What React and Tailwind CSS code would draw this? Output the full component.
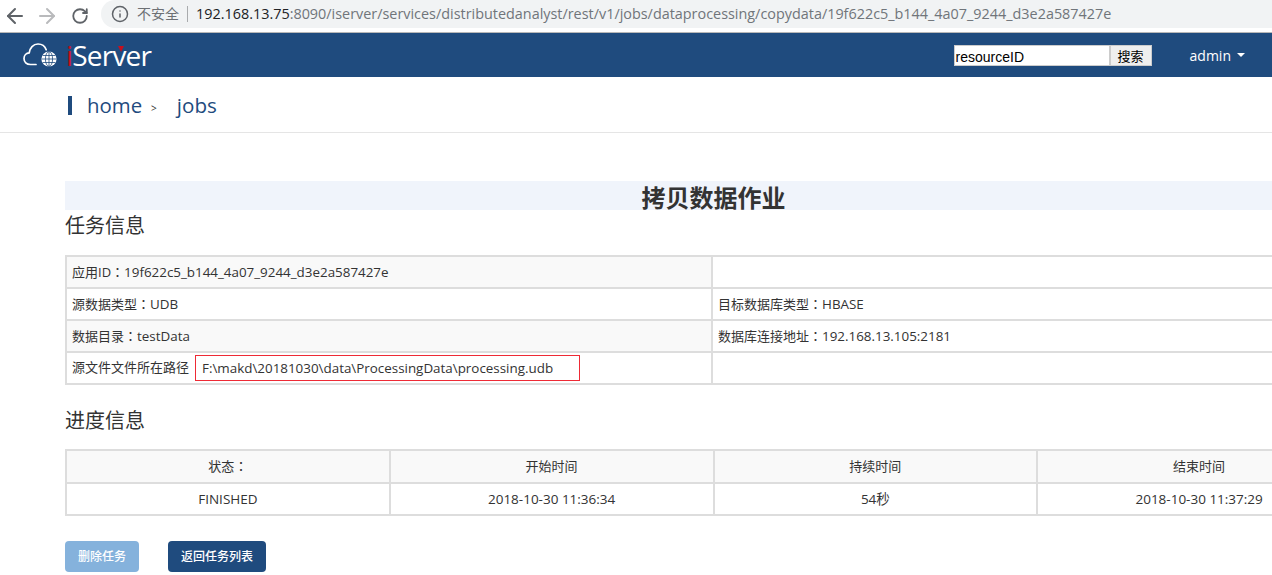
import React from 'react';
import { ArrowLeft, ArrowRight, RotateCw, Info } from 'lucide-react';

const cjk = '"Open Sans", "Noto Sans CJK SC", sans-serif';

function Logo() {
    return (
        <div className="flex items-center ml-[23px]">
            <svg width="38" height="26" viewBox="0 0 38 26" fill="none">
                <path d="M13 22.5H7.5C3.5 22.5 1 20 1 16.5C1 13.2 3.4 11 6.2 10.8C6.8 6 10.2 2 15 2C19 2 22 4.4 23.2 7.8" stroke="white" strokeWidth="1.7" strokeLinecap="round" />
                <circle cx="26" cy="17" r="7.6" fill="white" />
                <g stroke="#1f4b7e" strokeWidth="0.8">
                    <path d="M18.5 17H33.5M19.6 13.5H32.4M19.6 20.5H32.4M26 9.5V24.5" />
                    <ellipse cx="26" cy="17" rx="3.6" ry="7.4" />
                </g>
            </svg>
            <div className="relative ml-[5px] text-[28px] leading-none text-white tracking-[-0.8px] font-['Open_Sans',sans-serif]">
                <span className="text-[#c5101f]">i</span>Server
                <span className="absolute left-[52px] top-[5px] w-0 h-0 border-l-[3px] border-r-[3px] border-t-[6px] border-l-transparent border-r-transparent border-t-[#c5101f]"></span>
            </div>
        </div>
    );
}

function BrowserBar() {
    return (
        <div className="h-[33px] bg-white border-b border-[#b8b8b8] flex items-center">
            <ArrowLeft className="ml-[3px] text-[#5f6368]" size={24} strokeWidth={2} />
            <ArrowRight className="ml-[8px] text-[#b9babc]" size={24} strokeWidth={2} />
            <RotateCw className="ml-[12px] text-[#5f6368]" size={18} strokeWidth={2.4} />
            <div className="ml-[12px] flex-1 h-[28px] mb-[4px] mt-[-1px] bg-[#f1f3f4] rounded-l-[14px] flex items-center text-[14.4px] whitespace-nowrap font-['Open_Sans','Noto_Sans_CJK_SC',sans-serif]">
                <Info className="ml-[10px] text-[#5f6368]" size={18} strokeWidth={2} />
                <span className="ml-[8px] text-[14px] text-[#6d7074]">不安全</span>
                <span className="ml-[8px] w-px h-[16px] bg-[#a9abad]"></span>
                <span className="ml-[8px] text-[#202124]">192.168.13.75</span>
                <span className="text-[#70757a]">:8090/iserver/services/distributedanalyst/rest/v1/jobs/dataprocessing/copydata/19f622c5_b144_4a07_9244_d3e2a587427e</span>
            </div>
        </div>
    );
}

function NavBar() {
    return (
        <div className="h-[44px] bg-[#1f4b7e] flex items-center">
            <Logo />
            <div className="ml-auto flex items-center">
                <div className="w-[156px] h-[21px] bg-white border border-[#ccc] text-[14px] leading-[22px] text-black pl-[1px] overflow-hidden font-['Liberation_Sans',sans-serif]">resourceID</div>
                <div className="w-[42px] h-[21px] bg-[#efefef] border border-[#ccc] text-[13px] leading-[19px] text-black text-center font-['Noto_Sans_CJK_SC',sans-serif]">搜索</div>
                <div className="ml-[38px] mr-[27px] flex items-center text-[14px] text-white font-['Open_Sans',sans-serif]">
                    admin
                    <span className="ml-[6px] w-0 h-0 border-l-[4px] border-r-[4px] border-t-[4px] border-l-transparent border-r-transparent border-t-white"></span>
                </div>
            </div>
        </div>
    );
}

function Breadcrumb() {
    return (
        <div className="h-[56px] border-b border-[#e5e5e5] flex items-center pl-[68px] pt-[1px] text-[#1f4b7e] font-['Open_Sans',sans-serif]">
            <span className="w-[4px] h-[19px] bg-[#1f4b7e]"></span>
            <span className="ml-[15px] text-[20.4px]">home</span>
            <span className="ml-[9px] mt-[6px] text-[10px] text-[#333]">&gt;</span>
            <span className="ml-[20px] text-[20.6px]">jobs</span>
        </div>
    );
}

function Colon() {
    return <span className="font-['Noto_Sans_CJK_TC',sans-serif]">：</span>;
}

function Field({ label, value }) {
    return (
        <span>
            {label}
            <Colon />
            <span className="text-[13.4px]">{value}</span>
        </span>
    );
}

function InfoTable() {
    const rows = [
        [{ label: '应用ID', value: '19f622c5_b144_4a07_9244_d3e2a587427e' }, null],
        [{ label: '源数据类型', value: 'UDB' }, { label: '目标数据库类型', value: 'HBASE' }],
        [{ label: '数据目录', value: 'testData' }, { label: '数据库连接地址', value: '192.168.13.105:2181' }],
    ];
    return (
        <table className="w-full table-fixed border-collapse border-2 border-[#ddd] text-[13px] text-[#333]">
            <colgroup>
                <col className="w-[646px]" />
                <col />
            </colgroup>
            <tbody>
                {rows.map((row, index) => (
                    <tr key={index} className={index % 2 === 0 ? 'bg-[#f9f9f9] h-[32px]' : 'h-[32px]'}>
                        <td className="border-2 border-[#ddd] px-[5px] py-0"><Field {...row[0]} /></td>
                        <td className="border-2 border-[#ddd] px-[5px] py-0 bg-white">{row[1] && <Field {...row[1]} />}</td>
                    </tr>
                ))}
                <tr className="h-[32px]">
                    <td className="border-2 border-[#ddd] px-[5px] py-0">
                        <div className="flex items-center">
                            <span>源文件文件所在路径</span>
                            <span className="ml-[6px] w-[385px] h-[26px] border border-[#ee2a35] bg-white pl-[6px] leading-[24px] text-[13.4px]">F:\makd\20181030\data\ProcessingData\processing.udb</span>
                        </div>
                    </td>
                    <td className="border-2 border-[#ddd] px-[5px] py-0"></td>
                </tr>
            </tbody>
        </table>
    );
}

function ProgressTable() {
    const heads = [<>状态<Colon /></>, '开始时间', '持续时间', '结束时间'];
    const cells = ['FINISHED', '2018-10-30 11:36:34', '54秒', '2018-10-30 11:37:29'];
    return (
        <table className="w-full table-fixed border-collapse border-2 border-[#ddd] text-[13px] text-[#333] text-center">
            <tbody>
                <tr className="h-[33px] bg-[#f9f9f9]">
                    {heads.map((h, index) => <td key={index} className="border-2 border-[#ddd] p-0">{h}</td>)}
                </tr>
                <tr className="h-[32px]">
                    {cells.map((c) => <td key={c} className="border-2 border-[#ddd] p-0 text-[13.5px]">{c}</td>)}
                </tr>
            </tbody>
        </table>
    );
}

export default function App() {
    return (
        <div className="w-[1272px] h-[575px] overflow-hidden bg-white" style={{ fontFamily: cjk }}>
            <BrowserBar />
            <NavBar />
            <Breadcrumb />
            <div className="w-[1362px] pl-[65px] pt-[48px]">
                <div className="h-[29px] bg-[#f0f4fb] text-center text-[24px] font-bold leading-[34px] text-[#333]">拷贝数据作业</div>
                <div className="mt-[2px] text-[20px] leading-[28px] text-[#333]">任务信息</div>
                <div className="mt-[15px]"><InfoTable /></div>
                <div className="mt-[22px] text-[20px] leading-[28px] text-[#333]">进度信息</div>
                <div className="mt-[14px]"><ProgressTable /></div>
                <div className="mt-[25px] flex">
                    <button className="w-[74px] h-[31px] rounded-[4px] bg-[#85b2dc] text-white text-[12px] font-medium">删除任务</button>
                    <button className="ml-[29px] w-[98px] h-[31px] rounded-[4px] bg-[#1f4b7e] text-white text-[12px] font-medium">返回任务列表</button>
                </div>
            </div>
        </div>
    );
}
